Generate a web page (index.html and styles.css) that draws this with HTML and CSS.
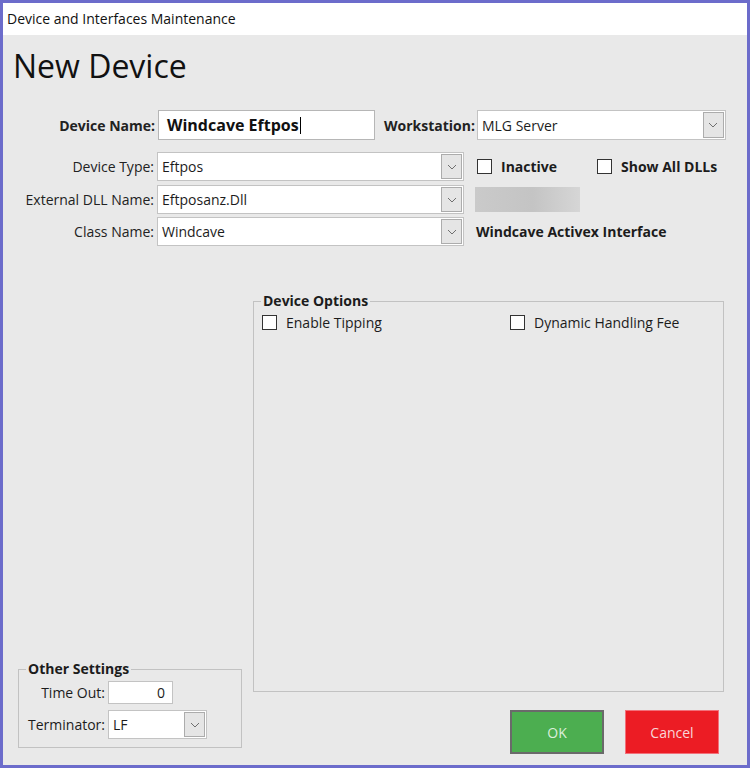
FILE: index.html
```html
<!DOCTYPE html>
<html lang="en">
<head>
  <meta charset="UTF-8">
  <title>Device and Interfaces Maintenance</title>
  <link rel="stylesheet" href="styles.css">
</head>
<body>
  <div class="window">
    <div class="titlebar">Device and Interfaces Maintenance</div>
    <div class="content">
      <h1 class="heading">New Device</h1>

      <div class="form">
        <div class="row row-name">
          <label class="lbl lbl-name">Device Name:</label>
          <div class="input input-name">Windcave Eftpos<span class="caret"></span></div>
          <label class="lbl lbl-ws">Workstation:</label>
          <div class="select select-ws">
            <span class="select-text">MLG Server</span>
            <span class="drop"><svg width="10" height="6" viewBox="0 0 10 6"><polyline points="1,1 5,5 9,1" fill="none" stroke="#6f6f6f" stroke-width="1"/></svg></span>
          </div>
        </div>

        <div class="row row-type">
          <label class="lbl">Device Type:</label>
          <div class="select select-main">
            <span class="select-text">Eftpos</span>
            <span class="drop"><svg width="10" height="6" viewBox="0 0 10 6"><polyline points="1,1 5,5 9,1" fill="none" stroke="#6f6f6f" stroke-width="1"/></svg></span>
          </div>
          <div class="check check-inactive"><span class="box"></span>Inactive</div>
          <div class="check"><span class="box"></span>Show All DLLs</div>
        </div>

        <div class="row row-dll">
          <label class="lbl">External DLL Name:</label>
          <div class="select select-main">
            <span class="select-text">Eftposanz.Dll</span>
            <span class="drop"><svg width="10" height="6" viewBox="0 0 10 6"><polyline points="1,1 5,5 9,1" fill="none" stroke="#6f6f6f" stroke-width="1"/></svg></span>
          </div>
          <div class="blur-box"></div>
        </div>

        <div class="row row-class">
          <label class="lbl">Class Name:</label>
          <div class="select select-main">
            <span class="select-text">Windcave</span>
            <span class="drop"><svg width="10" height="6" viewBox="0 0 10 6"><polyline points="1,1 5,5 9,1" fill="none" stroke="#6f6f6f" stroke-width="1"/></svg></span>
          </div>
          <div class="class-desc">Windcave Activex Interface</div>
        </div>
      </div>

      <div class="lower">
        <div class="left-col">
          <fieldset class="group group-other">
            <legend>Other Settings</legend>
            <div class="mini-row">
              <label class="mini-lbl">Time Out:</label>
              <div class="input input-timeout">0</div>
            </div>
            <div class="mini-row">
              <label class="mini-lbl">Terminator:</label>
              <div class="select select-term">
                <span class="select-text">LF</span>
                <span class="drop"><svg width="10" height="6" viewBox="0 0 10 6"><polyline points="1,1 5,5 9,1" fill="none" stroke="#6f6f6f" stroke-width="1"/></svg></span>
              </div>
            </div>
          </fieldset>
        </div>

        <div class="right-col">
          <fieldset class="group group-options">
            <legend>Device Options</legend>
            <div class="options">
              <div class="opt"><span class="box"></span>Enable Tipping</div>
              <div class="opt"><span class="box"></span>Dynamic Handling Fee</div>
            </div>
          </fieldset>
          <div class="buttons">
            <button class="btn btn-ok">OK</button>
            <button class="btn btn-cancel">Cancel</button>
          </div>
        </div>
      </div>
    </div>
  </div>
</body>
</html>
```

FILE: styles.css
```css
body{
  margin: 0;
  font-family: "Open Sans", "Noto Sans", sans-serif;
  color: #1c1c1c;
  background: #ffffff;
}
.window{
  width: 750px;
  height: 768px;
  box-sizing: border-box;
  border: 3px solid #6c6ccb;
  background: #e9e9e9;
  display: flex;
  flex-direction: column;
}
.titlebar{
  height: 32px;
  line-height: 32px;
  background: #ffffff;
  font-size: 14px;
  padding-left: 4px;
  color: #111;
}
.content{
  flex: 1;
  display: flex;
  flex-direction: column;
}
.heading{
  margin: 0;
  font-weight: normal;
  font-size: 32px;
  line-height: 40px;
  padding: 11px 0 0 10px;
  color: #111;
}

/* top form */
.form{
  margin-top: 24px;
}
.row{
  display: flex;
  align-items: center;
}
.row-name{
  height: 30px;
}
.row-type{
  margin-top: 12px;
  height: 29px;
}
.row-dll{
  margin-top: 4px;
  height: 29px;
}
.row-class{
  margin-top: 3px;
  height: 29px;
}
.lbl{
  width: 151px;
  text-align: right;
  font-size: 14px;
  margin-right: 3px;
  color: #222;
}
.lbl-name{
  width: 152px;
  font-weight: bold;
  font-size: 14px;
}
.lbl-ws{
  width: auto;
  font-weight: bold;
  font-size: 14px;
  margin-left: 9px;
  margin-right: 2px;
}
.input{
  box-sizing: border-box;
  background: #ffffff;
  border: 1px solid #b6b6b6;
  display: flex;
  align-items: center;
}
.input-name{
  width: 217px;
  height: 30px;
  padding-left: 8px;
  font-weight: bold;
  font-size: 16px;
  color: #111;
}
.caret{
  display: inline-block;
  width: 1px;
  height: 17px;
  background: #000;
  margin-left: 1px;
}
.select{
  box-sizing: border-box;
  background: #ffffff;
  border: 1px solid #c3c3c3;
  display: flex;
  align-items: stretch;
  font-size: 14px;
}
.select-text{
  flex: 1;
  display: flex;
  align-items: center;
  padding-left: 4px;
}
.drop{
  width: 21px;
  margin: 1px 1px 1px 0;
  box-sizing: border-box;
  background: #e5e5e5;
  border: 1px solid #acacac;
  display: flex;
  align-items: center;
  justify-content: center;
}
.select-ws{
  width: 249px;
  height: 30px;
}
.select-main{
  width: 307px;
  height: 29px;
}
.check{
  display: flex;
  align-items: center;
  font-weight: bold;
  font-size: 14px;
  color: #1c1c1c;
}
.check-inactive{
  margin-left: 13px;
  width: 120px;
}
.box{
  width: 15px;
  height: 15px;
  box-sizing: border-box;
  border: 1px solid #333;
  background: #ffffff;
  margin-right: 9px;
}
.blur-box{
  margin-left: 11px;
  width: 105px;
  height: 25px;
  background: linear-gradient(to right, #cacaca, #c4c4c4 55%, #d6d6d6);
}
.class-desc{
  margin-left: 12px;
  font-weight: bold;
  font-size: 14px;
}

/* lower area */
.lower{
  flex: 1;
  display: grid;
  grid-template-columns: 224px 471px;
  column-gap: 11px;
  padding: 0 0 12px 15px;
}
.left-col{
  align-self: end;
  margin-bottom: 6px;
}
.right-col{
  padding-top: 46px;
}
.group{
  margin: 0;
  border: 1px solid #c2c2c2;
  padding: 0 7px;
}
.group legend{
  padding: 0 2px;
  font-weight: bold;
  font-size: 14px;
  line-height: 18px;
  color: #1c1c1c;
}
.group-options{
  height: 400px;
  box-sizing: border-box;
}
.options{
  display: grid;
  grid-template-columns: 248px 1fr;
  margin-top: 3px;
}
.opt{
  display: flex;
  align-items: center;
  font-size: 14px;
  margin-left: 1px;
}
.opt .box{
  margin-right: 9px;
}
.group-other{
  padding-bottom: 8px;
}
.mini-row{
  display: flex;
  align-items: center;
  margin-top: 3px;
}
.mini-row + .mini-row{
  margin-top: 6px;
}
.mini-lbl{
  width: 79px;
  text-align: right;
  font-size: 14px;
  margin-right: 3px;
}
.input-timeout{
  width: 65px;
  height: 23px;
  justify-content: flex-end;
  padding-right: 7px;
  font-size: 14px;
  border-color: #c3c3c3;
}
.select-term{
  width: 99px;
  height: 29px;
}
.buttons{
  display: flex;
  justify-content: flex-end;
  gap: 21px;
  padding-right: 5px;
  margin-top: 18px;
}
.btn{
  width: 94px;
  height: 44px;
  font-family: "Open Sans", "Noto Sans", sans-serif;
  font-size: 14px;
  cursor: pointer;
}
.btn-ok{
  background: #4cae50;
  border: 2px solid #6a6a6a;
  color: #dcefdc;
}
.btn-cancel{
  background: #ec1c24;
  border: 1px solid #f2707a;
  color: #f8d6d8;
}
```
